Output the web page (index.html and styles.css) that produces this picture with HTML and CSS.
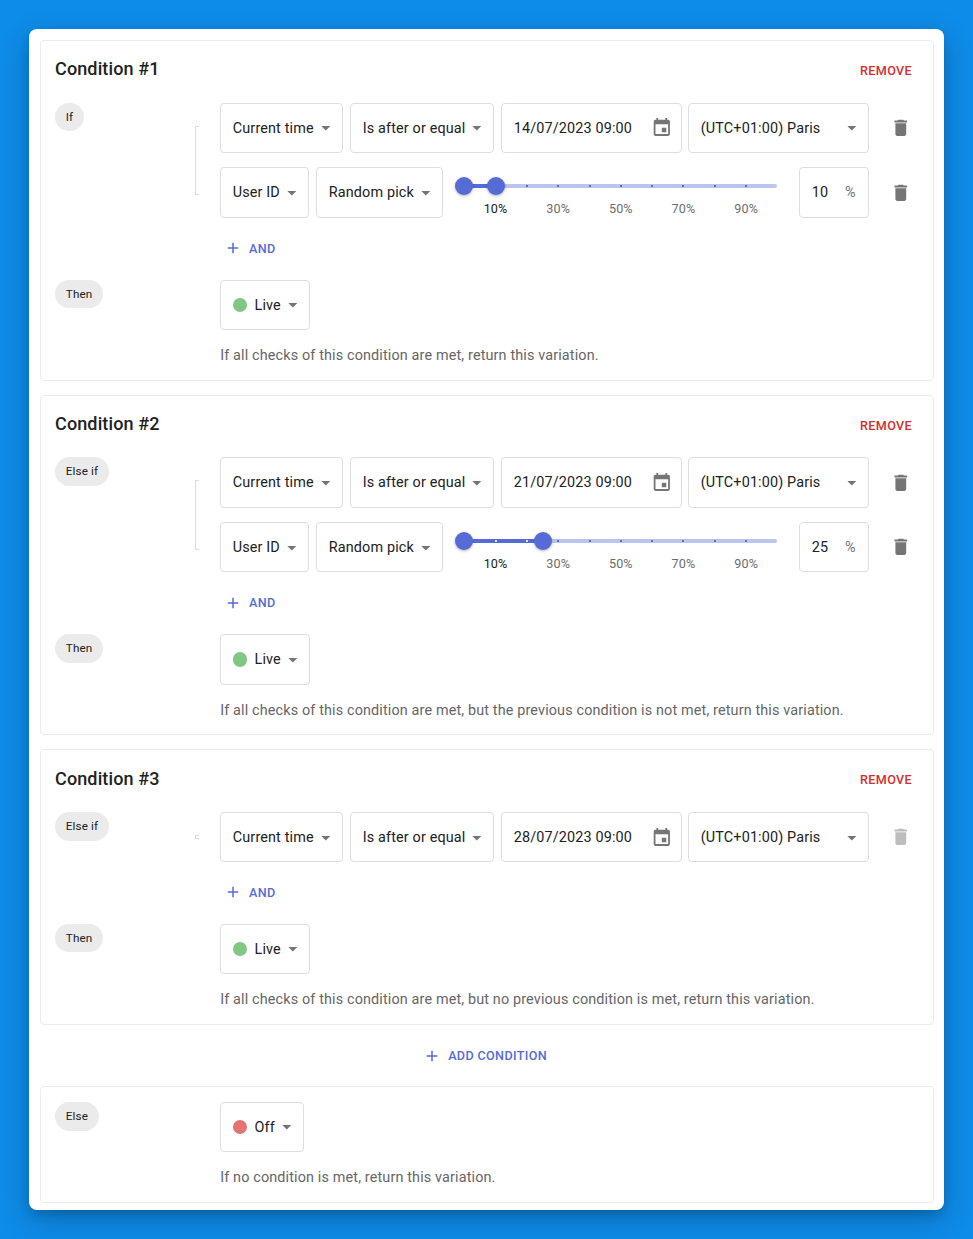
FILE: index.html
```html
<!DOCTYPE html>
<html lang="en">
<head>
<meta charset="utf-8">
<title>Conditions</title>
<link rel="stylesheet" href="styles.css">
</head>
<body>
<svg class="sprite" aria-hidden="true">
  <symbol id="arrow" viewBox="0 0 24 24"><path d="M7 10l5 5 5-5z"/></symbol>
  <symbol id="trash" viewBox="0 0 24 24"><path d="M6 19c0 1.1.9 2 2 2h8c1.1 0 2-.9 2-2V7H6v12zM19 4h-3.5l-1-1h-5l-1 1H5v2h14V4z"/></symbol>
  <symbol id="calendar" viewBox="0 0 24 24"><path d="M17 12h-5v5h5v-5zM16 1v2H8V1H6v2H5c-1.11 0-1.99.9-1.99 2L3 19c0 1.1.89 2 2 2h14c1.1 0 2-.9 2-2V5c0-1.1-.9-2-2-2h-1V1h-2zm3 18H5V8h14v11z"/></symbol>
  <symbol id="plus" viewBox="0 0 24 24"><path d="M19 13h-6v6h-2v-6H5v-2h6V5h2v6h6v2z"/></symbol>
</svg>
<main class="card">
  <section class="panel">
    <header class="head"><h2 class="title">Condition #1</h2><button class="remove">REMOVE</button></header>
    <div class="block">
      <div class="side"><span class="chip">If</span></div>
      <div class="bracket"></div>
      <div class="rows">
        <div class="row">
          <div class="field w-time"><span>Current time</span><svg class="arrow"><use href="#arrow"/></svg></div>
          <div class="field w-op"><span>Is after or equal</span><svg class="arrow"><use href="#arrow"/></svg></div>
          <div class="field w-date"><span class="date">14/07/2023 09:00</span><svg class="icon"><use href="#calendar"/></svg></div>
          <div class="field w-zone"><span class="zone">(UTC+01:00) Paris</span><svg class="arrow"><use href="#arrow"/></svg></div>
          <button class="delete"><svg class="icon"><use href="#trash"/></svg></button>
        </div>
        <div class="row">
          <div class="field w-user"><span>User ID</span><svg class="arrow"><use href="#arrow"/></svg></div>
          <div class="field w-pick"><span>Random pick</span><svg class="arrow"><use href="#arrow"/></svg></div>
          <div class="slider">
            <div class="rail">
              <div class="range" style="width:10%"></div>
              <i class="tick in" style="left:10%"></i><i class="tick" style="left:20%"></i><i class="tick" style="left:30%"></i><i class="tick" style="left:40%"></i><i class="tick" style="left:50%"></i><i class="tick" style="left:60%"></i><i class="tick" style="left:70%"></i><i class="tick" style="left:80%"></i><i class="tick" style="left:90%"></i>
              <b class="thumb" style="left:0%"></b><b class="thumb" style="left:10%"></b>
            </div>
            <div class="marks"><span class="on">10%</span><span>30%</span><span>50%</span><span>70%</span><span>90%</span></div>
          </div>
          <div class="field w-pct"><span>10</span><span class="unit">%</span></div>
          <button class="delete"><svg class="icon"><use href="#trash"/></svg></button>
        </div>
      </div>
    </div>
    <div class="add-row"><button class="add"><svg class="plus"><use href="#plus"/></svg>AND</button></div>
    <div class="block">
      <div class="side"><span class="chip">Then</span></div>
      <div class="result">
        <div class="field w-live"><i class="dot green"></i><span>Live</span><svg class="arrow"><use href="#arrow"/></svg></div>
        <p class="help">If all checks of this condition are met, return this variation.</p>
      </div>
    </div>
  </section>

  <section class="panel">
    <header class="head"><h2 class="title">Condition #2</h2><button class="remove">REMOVE</button></header>
    <div class="block">
      <div class="side"><span class="chip">Else if</span></div>
      <div class="bracket"></div>
      <div class="rows">
        <div class="row">
          <div class="field w-time"><span>Current time</span><svg class="arrow"><use href="#arrow"/></svg></div>
          <div class="field w-op"><span>Is after or equal</span><svg class="arrow"><use href="#arrow"/></svg></div>
          <div class="field w-date"><span class="date">21/07/2023 09:00</span><svg class="icon"><use href="#calendar"/></svg></div>
          <div class="field w-zone"><span class="zone">(UTC+01:00) Paris</span><svg class="arrow"><use href="#arrow"/></svg></div>
          <button class="delete"><svg class="icon"><use href="#trash"/></svg></button>
        </div>
        <div class="row">
          <div class="field w-user"><span>User ID</span><svg class="arrow"><use href="#arrow"/></svg></div>
          <div class="field w-pick"><span>Random pick</span><svg class="arrow"><use href="#arrow"/></svg></div>
          <div class="slider">
            <div class="rail">
              <div class="range" style="width:25%"></div>
              <i class="tick in" style="left:10%"></i><i class="tick in" style="left:20%"></i><i class="tick" style="left:30%"></i><i class="tick" style="left:40%"></i><i class="tick" style="left:50%"></i><i class="tick" style="left:60%"></i><i class="tick" style="left:70%"></i><i class="tick" style="left:80%"></i><i class="tick" style="left:90%"></i>
              <b class="thumb" style="left:0%"></b><b class="thumb" style="left:25%"></b>
            </div>
            <div class="marks"><span class="on">10%</span><span>30%</span><span>50%</span><span>70%</span><span>90%</span></div>
          </div>
          <div class="field w-pct"><span>25</span><span class="unit">%</span></div>
          <button class="delete"><svg class="icon"><use href="#trash"/></svg></button>
        </div>
      </div>
    </div>
    <div class="add-row"><button class="add"><svg class="plus"><use href="#plus"/></svg>AND</button></div>
    <div class="block">
      <div class="side"><span class="chip">Then</span></div>
      <div class="result">
        <div class="field w-live"><i class="dot green"></i><span>Live</span><svg class="arrow"><use href="#arrow"/></svg></div>
        <p class="help">If all checks of this condition are met, but the previous condition is not met, return this variation.</p>
      </div>
    </div>
  </section>

  <section class="panel">
    <header class="head"><h2 class="title">Condition #3</h2><button class="remove">REMOVE</button></header>
    <div class="block">
      <div class="side"><span class="chip">Else if</span></div>
      <div class="bracket"></div>
      <div class="rows">
        <div class="row">
          <div class="field w-time"><span>Current time</span><svg class="arrow"><use href="#arrow"/></svg></div>
          <div class="field w-op"><span>Is after or equal</span><svg class="arrow"><use href="#arrow"/></svg></div>
          <div class="field w-date"><span class="date">28/07/2023 09:00</span><svg class="icon"><use href="#calendar"/></svg></div>
          <div class="field w-zone"><span class="zone">(UTC+01:00) Paris</span><svg class="arrow"><use href="#arrow"/></svg></div>
          <button class="delete disabled"><svg class="icon"><use href="#trash"/></svg></button>
        </div>
      </div>
    </div>
    <div class="add-row"><button class="add"><svg class="plus"><use href="#plus"/></svg>AND</button></div>
    <div class="block">
      <div class="side"><span class="chip">Then</span></div>
      <div class="result">
        <div class="field w-live"><i class="dot green"></i><span>Live</span><svg class="arrow"><use href="#arrow"/></svg></div>
        <p class="help">If all checks of this condition are met, but no previous condition is met, return this variation.</p>
      </div>
    </div>
  </section>

  <div class="add-condition"><button class="add"><svg class="plus"><use href="#plus"/></svg>ADD CONDITION</button></div>

  <section class="panel last">
    <div class="block">
      <div class="side"><span class="chip">Else</span></div>
      <div class="result">
        <div class="field w-off"><i class="dot red"></i><span>Off</span><svg class="arrow"><use href="#arrow"/></svg></div>
        <p class="help">If no condition is met, return this variation.</p>
      </div>
    </div>
  </section>
</main>
</body>
</html>
```
FILE: styles.css
```css
* { box-sizing: border-box; }
body {
  margin: 0;
  height: 1239px;
  padding: 29px;
  overflow: hidden;
  background: #0e8ce9;
  font-family: Roboto, sans-serif;
  font-size: 14.4px;
  letter-spacing: 0.14px;
  color: #212121;
}
.sprite { display: none; }
button { border: 0; background: none; padding: 0; font: inherit; letter-spacing: inherit; color: inherit; }
svg { display: block; fill: currentColor; flex: none; }
.card {
  width: 915px;
  height: 1181px;
  padding: 11.2px 10px 0 11px;
  border-radius: 8px;
  background: #fff;
  box-shadow: 0 5px 12px -2px rgba(0, 0, 0, 0.18), 0 10px 30px rgba(0, 0, 0, 0.22);
}
.panel {
  border: 1px solid #ececec;
  border-radius: 4px;
  padding: 0 14px 0 14px;
  height: 340.7px;
  margin-bottom: 13.9px;
}
.panel:nth-of-type(3) { height: 275.4px; margin-bottom: 0; }
.panel.last { height: 116.6px; padding-top: 14.4px; margin: 0; }
.head { display: flex; height: 61.5px; justify-content: space-between; padding: 16.2px 7px 0 0; }
.title { margin: 0; font-size: 18px; font-weight: 500; line-height: 24px; letter-spacing: 0.13px; }
.remove { height: 26.6px; color: #d32f2f; font-size: 12.6px; font-weight: 500; letter-spacing: 0.36px; }
.block { display: flex; }
.side { flex: none; width: 140px; }
.chip {
  display: inline-flex;
  align-items: center;
  height: 28.8px;
  padding: 0 10.8px 0.6px;
  border-radius: 15px;
  background: #ebebeb;
  font-size: 11.7px;
  letter-spacing: 0.14px;
}
.bracket { flex: none; width: 4px; margin: 23.2px 21.2px 23.2px 0; border: 1px solid #dcdcdc; border-right: 0; }
.rows { display: flex; flex-direction: column; gap: 14.2px; }
.row { display: flex; width: 701px; }
.field {
  display: flex;
  flex: none;
  align-items: center;
  height: 50.4px;
  padding: 0.6px 0 0 11.6px;
  margin-right: 7px;
  border: 1px solid #dedede;
  border-radius: 4px;
  white-space: nowrap;
}
.arrow { width: 21.6px; height: 21.6px; margin: 0 5.9px 0 auto; color: #757575; }
.icon { width: 21.6px; height: 21.6px; color: #757575; }
.w-time { width: 123px; }
.w-op { width: 144px; }
.w-date { width: 181px; margin-right: 6px; }
.w-date .icon { margin: 0 9px 0 auto; }
.w-zone { width: 181px; }
.w-user { width: 89px; }
.w-pick { width: 127px; }
.w-pct { width: 70px; margin-right: 7px; }
.unit { margin: 0 12.4px 0 auto; color: #757575; }
.w-live { width: 90px; }
.w-off { width: 84px; }
.delete { flex: none; width: 36px; margin-left: 7px; display: grid; place-items: center; }
.disabled .icon { color: #bdbdbd; }
.slider { flex: none; width: 313.3px; margin: 16.9px 21.7px 0 14px; }
.rail { position: relative; height: 4px; border-radius: 2px; background: #bbc5f0; }
.range { height: 4px; background: #556cd6; border-radius: 2px; }
.tick { position: absolute; top: 1px; width: 2px; height: 2px; margin-left: -1px; background: #556cd6; }
.tick.in { background: #dfe3fa; }
.thumb {
  position: absolute;
  top: -7px;
  width: 18px;
  height: 18px;
  margin-left: -9px;
  border-radius: 50%;
  background: #556cd6;
  box-shadow: 0 1px 3px rgba(0, 0, 0, 0.3);
}
.marks { display: flex; margin-top: 12px; color: #6d6d6d; font-size: 12.6px; line-height: 18px; letter-spacing: 0.12px; }
.marks span { width: 20%; text-align: center; }
.marks .on { color: #212121; }
.add-row { display: flex; height: 61.4px; align-items: center; padding: 0 0 0.9px 168.9px; }
.add { display: flex; align-items: center; gap: 7.2px; color: #556cd6; font-size: 12.6px; font-weight: 500; letter-spacing: 0.36px; }
.plus { width: 18px; height: 18px; }
.result { margin-left: 25.2px; }
.dot { width: 14.4px; height: 14.4px; margin-right: 7.4px; border-radius: 50%; }
.green { background: #81c784; }
.red { background: #e57373; }
.help { margin: 16px 0 0; line-height: 20px; color: #666; white-space: nowrap; }
.add-condition { display: flex; height: 61.6px; align-items: center; justify-content: center; padding-right: 4px; }
```
